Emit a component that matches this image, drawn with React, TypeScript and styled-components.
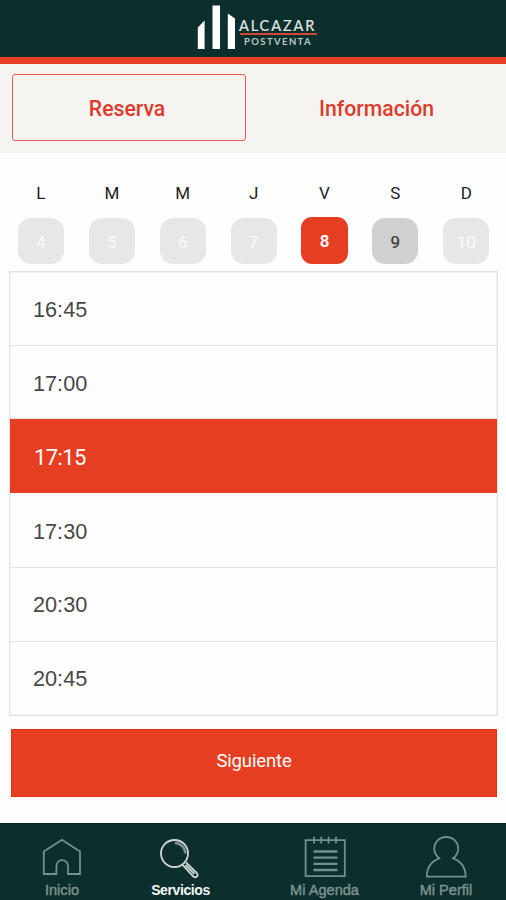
import React, { useState } from 'react';
import styled, { createGlobalStyle, css } from 'styled-components';

const RED = '#e53e22';
const GREEN = '#0c2f2d';

const GlobalStyle = createGlobalStyle`
  *, *::before, *::after { box-sizing: border-box; }
  body { margin: 0; background: #fff; font-family: Roboto, 'Liberation Sans', sans-serif; }
  button { font: inherit; margin: 0; padding: 0; border: 0; background: none; cursor: pointer; }
`;

const Screen = styled.div`
  width: 506px;
  height: 900px;
  display: flex;
  flex-direction: column;
  overflow: hidden;
  background: #fefefe;
`;

const Header = styled.header`
  height: 64px;
  flex: none;
  display: flex;
  padding-left: 197px;
  background: ${GREEN};
  border-bottom: 7px solid ${RED};
`;

const LogoMark = styled.svg`
  display: block;
  width: 39px;
  height: 57px;
`;

const Brand = styled.div`
  width: 78px;
  margin: 17px 0 0 3px;
  display: flex;
  flex-direction: column;
  align-items: center;
  font-family: Lato, sans-serif;
  white-space: nowrap;
`;

const BrandName = styled.span`
  width: 100%;
  height: 16px;
  font-size: 14.5px;
  line-height: 17px;
  letter-spacing: 1.9px;
  color: #e2e7e5;
  -webkit-text-stroke: 0.2px currentColor;
`;

const BrandRule = styled.span`
  width: 77px;
  height: 2px;
  background: #cf4a36;
`;

const BrandSub = styled.span`
  margin: 2px 0 0;
  font-size: 9.5px;
  line-height: 10px;
  letter-spacing: 1.4px;
  font-weight: 700;
  color: #bac7c3;
`;

const Tabs = styled.nav`
  height: 89px;
  flex: none;
  display: grid;
  grid-template-columns: 234px 235px;
  column-gap: 15px;
  padding: 10px 10px 12px 12px;
  background: #f5f4f1;
`;

const Tab = styled.button<{ $active?: boolean }>`
  border: 1px solid ${p => (p.$active ? '#e2604d' : 'transparent')};
  border-radius: 3px;
  color: #dc3c2b;
  font-size: 21.2px;
  font-weight: 500;
  line-height: 24px;
  padding: 2px 4px 0 0;
`;

const Week = styled.section`
  height: 118px;
  flex: none;
  display: grid;
  grid-template-columns: repeat(7, 70.9px);
  padding: 30px 0 0 5.5px;
`;

const Day = styled.div`
  display: flex;
  flex-direction: column;
  align-items: center;
`;

const DayName = styled.span`
  height: 20px;
  font-size: 17px;
  line-height: 20px;
  color: #222;
`;

type ChipState = 'disabled' | 'available' | 'selected';

const chipStyles = {
  disabled: css`
    background: #e7e7e7;
    color: #fafafa;
  `,
  available: css`
    background: #d0d0d0;
    color: #383838;
    -webkit-text-stroke: 0.2px currentColor;
  `,
  selected: css`
    height: 47px;
    width: 47px;
    margin-top: 14px;
    padding-top: 0;
    border-radius: 11px;
    background: ${RED};
    color: #fff;
    font-weight: 600;
  `,
};

const Chip = styled.button<{ $state: ChipState }>`
  width: 46px;
  height: 46px;
  margin-top: 15px;
  padding-top: 2px;
  border-radius: 13px;
  font-size: 17px;
  line-height: 20px;
  ${p => chipStyles[p.$state]}
`;

const Slots = styled.ul`
  list-style: none;
  margin: 0 8px 0 9px;
  padding: 0 1px;
  height: 445px;
  flex: none;
  display: grid;
  grid-template-rows: 75px 73px 74px 75px 74px 74px;
  box-shadow: inset 0 0 0 1.5px #e3e3e3;
`;

const Slot = styled.li<{ $selected: boolean }>`
  display: flex;
  align-items: center;
  padding: 3px 0 0 23px;
  font-family: 'Liberation Sans', Arial, sans-serif;
  font-size: 21.7px;
  color: #484848;
  cursor: pointer;
  &:not(:last-child) { border-bottom: 1.5px solid #e3e3e3; }
  &:nth-child(n + 5) { padding-top: 0; }
  ${p =>
    p.$selected &&
    css`
      && { border-bottom: 0; }
      padding-left: 24px;
      background: ${RED};
      color: #fff;
      font-family: Roboto, sans-serif;
      font-size: 22px;
      letter-spacing: -0.6px;
    `}
`;

const NextButton = styled.button`
  height: 68px;
  flex: none;
  margin: 13px 9px 26px 11px;
  && { padding-bottom: 4px; }
  border: 1px solid #df3016;
  background: ${RED};
  color: #fff;
  font-size: 18.5px;
  letter-spacing: -0.15px;
`;

const Footer = styled.footer`
  height: 77px;
  flex: none;
  display: grid;
  grid-template-columns: 124px 113px 175px 68px;
  background: ${GREEN};
  border-top: 1px solid #052522;
`;

const NavItem = styled.button<{ $active?: boolean }>`
  display: flex;
  flex-direction: column;
  align-items: center;
  color: ${p => (p.$active ? '#f5f7f6' : '#7e9290')};
  font-family: 'Liberation Sans', Arial, sans-serif;
  font-size: ${p => (p.$active ? '14px' : '14.6px')};
  font-weight: ${p => (p.$active ? 700 : 400)};
  letter-spacing: ${p => (p.$active ? '-0.4px' : '0')};
  line-height: 16px;
  white-space: nowrap;
  -webkit-text-stroke: ${p => (p.$active ? '0' : '0.4px currentColor')};
`;

const NavIcon = styled.svg<{ $active?: boolean }>`
  display: block;
  width: 44px;
  height: 48px;
  margin: 10px 0 0;
  fill: none;
  stroke: ${p => (p.$active ? '#cfd7d5' : '#72908d')};
  stroke-width: 1.8;
`;

const days: { name: string; date: number; available: boolean }[] = [
  { name: 'L', date: 4, available: false },
  { name: 'M', date: 5, available: false },
  { name: 'M', date: 6, available: false },
  { name: 'J', date: 7, available: false },
  { name: 'V', date: 8, available: true },
  { name: 'S', date: 9, available: true },
  { name: 'D', date: 10, available: false },
];

const times = ['16:45', '17:00', '17:15', '17:30', '20:30', '20:45'];

const icons = {
  home: <path d="M3.8 17.5 22 5.8 40 17.5V40H28V32a5.8 5.8 0 0 0-11.6 0v8H3.8Z" />,
  search: (
    <>
      <circle cx="15.500" cy="19.500" r="13.500" />
      <path d="M16 9a10.500 10.500 0 0 1 10.300 10.500" strokeWidth="2.6" strokeOpacity=".6" />
      <path d="m23.800 31.200 10.600 11.300c2.400 2 5.500-.8 3.500-3.300L27 28.300M26.500 31l9 9" />
    </>
  ),
  agenda: (
    <>
      <path d="M2.6 6.2h39.2v36H2.6zM11 2.8v6.6M18.3 2.8v6.6M25.6 2.8v6.6M33 2.8v6.6" />
      <path d="M10.5 17.5h24M10.5 23.7h24M10.5 29.8h24M10.5 36h24" strokeWidth="2.3" />
    </>
  ),
  profile: (
    <path d="M15.2 24.3C6.8 27.5 2.8 33.5 2.8 42.6h38.8c0-9.1-4-15.1-12.4-18.3 3.5-3 5-5.6 5-9.6 0-6.6-5-11.7-12-11.7S10.3 8.1 10.3 14.7c0 4 1.4 6.6 4.9 9.6Z" />
  ),
};

const navItems: { label: string; icon: keyof typeof icons }[] = [
  { label: 'Inicio', icon: 'home' },
  { label: 'Servicios', icon: 'search' },
  { label: 'Mi Agenda', icon: 'agenda' },
  { label: 'Mi Perfil', icon: 'profile' },
];

export default function App() {
  const [date, setDate] = useState(8);
  const [time, setTime] = useState('17:15');
  const [tab, setTab] = useState('Reserva');

  return (
    <>
      <GlobalStyle />
      <Screen>
        <Header>
          <LogoMark viewBox="0 0 39 57" fill="#fff">
            <path d="M.8 27.500 7.600 20.500V49H.8zM15.500 5.500H23V49h-7.500zM30.800 13.500l7.200 5V49h-7.200z" />
          </LogoMark>
          <Brand>
            <BrandName>ALCAZAR</BrandName>
            <BrandRule />
            <BrandSub>POSTVENTA</BrandSub>
          </Brand>
        </Header>
        <Tabs>
          {['Reserva', 'Información'].map(name => (
            <Tab key={name} $active={tab === name} onClick={() => setTab(name)}>
              {name}
            </Tab>
          ))}
        </Tabs>
        <Week>
          {days.map(day => (
            <Day key={day.date}>
              <DayName>{day.name}</DayName>
              <Chip
                disabled={!day.available}
                $state={!day.available ? 'disabled' : day.date === date ? 'selected' : 'available'}
                onClick={() => setDate(day.date)}
              >
                {day.date}
              </Chip>
            </Day>
          ))}
        </Week>
        <Slots>
          {times.map(t => (
            <Slot key={t} $selected={t === time} onClick={() => setTime(t)}>
              {t}
            </Slot>
          ))}
        </Slots>
        <NextButton>Siguiente</NextButton>
        <Footer>
          {navItems.map(item => (
            <NavItem key={item.label} $active={item.icon === 'search'}>
              <NavIcon viewBox="0 0 44 48" $active={item.icon === 'search'}>
                {icons[item.icon]}
              </NavIcon>
              {item.label}
            </NavItem>
          ))}
        </Footer>
      </Screen>
    </>
  );
}
